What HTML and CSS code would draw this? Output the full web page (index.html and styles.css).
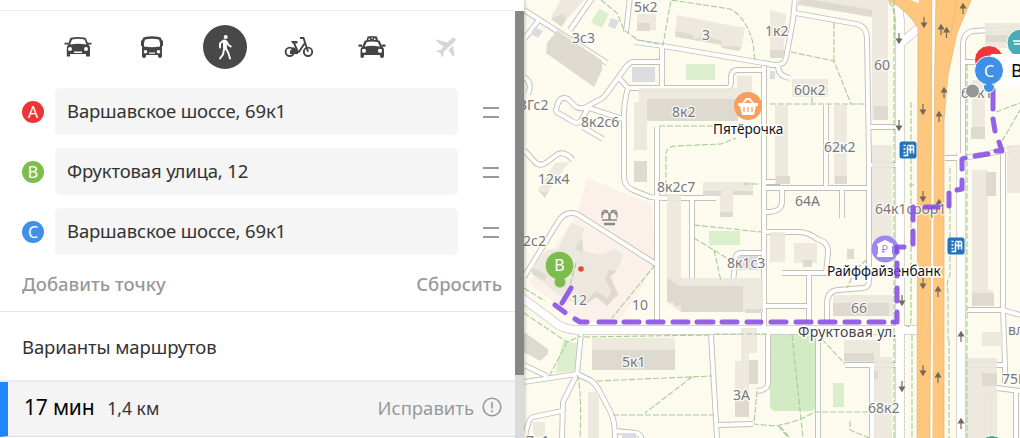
FILE: index.html
```html
<!DOCTYPE html>
<html lang="ru">
<head>
  <meta charset="UTF-8" />
  <meta name="viewport" content="width=device-width, initial-scale=1" />
  <title>Маршруты</title>
  <link rel="stylesheet" href="styles.css">
</head>
<body>

  <div class="app">
    <aside class="sidebar">
      <div class="panel">
        <div class="panel-top"></div>

        <nav class="modes">
          <button class="mode">
            <svg width="30" height="24" viewBox="0 0 30 24"><path fill-rule="evenodd" d="M7 3.5Q8 2 15 2T23 3.5L25.7 10Q27 11 27 13V21.5H23V19H7V21.5H3.800V13Q3.800 11 5 10ZM9 4.500 7 9.500Q15 8 23.500 9.500L21.500 4.500Q15 3 9 4.500ZM7 12A2 2 0 1 0 7 16 2 2 0 1 0 7 12M23 12A2 2 0 1 0 23 16 2 2 0 1 0 23 12M11 16.500V18H19V16.500Z"/><path d="M1.500 8.700H5.500M24.500 8.700H28.500" stroke="#444" stroke-width="1.800"/></svg>
          </button>
          <button class="mode">
            <svg width="30" height="24" viewBox="0 0 30 24"><path fill-rule="evenodd" d="M6 3Q8 1.200 15 1.200T24 3L25 5.500H26V11H25V21Q25 23 23 23T21 21V20H9V21Q9 23 7 23T5 21V11H4V5.500H5ZM8 4.500Q6.500 8 7 11.500Q15 13 23 11.500Q23.500 8 22 4.500Q15 3 8 4.500ZM8.500 15A1.800 1.800 0 1 0 8.500 18.600 1.800 1.800 0 1 0 8.500 15M21.500 15A1.800 1.800 0 1 0 21.500 18.600 1.800 1.800 0 1 0 21.500 15M12 17.500V18.800H18V17.500Z"/></svg>
          </button>
          <button class="mode active">
            <svg width="30" height="30" viewBox="0 0 30 30"><circle cx="15.700" cy="5" r="2"/><path d="M14.800 9.500 15 16" fill="none" stroke="#fff" stroke-width="3.800" stroke-linecap="round"/><path d="M13.500 8.500 10 11.500V15.500M16.500 9.500 18.500 13 20.800 14.500M16 16.500 18.500 21.500 20 26.500M14 17.500 13 22.500 10 26.500" fill="none" stroke="#fff" stroke-width="1.900" stroke-linecap="round" stroke-linejoin="round"/></svg>
          </button>
          <button class="mode">
            <svg width="30" height="24" viewBox="0 0 30 24"><g fill="none" stroke="#444" stroke-width="1.900"><circle cx="5.800" cy="16.800" r="4.200"/><circle cx="24" cy="16.800" r="4.200"/><path d="M16 3H19.500L24 16.800M6 16.800H15L20.500 8.500M10 8 13.500 16"/></g><path d="M7 6H13.500V8.500H8.500ZM9.500 12 14 15.500V19H6V16Z"/></svg>
          </button>
          <button class="mode">
            <svg width="30" height="24" viewBox="0 0 30 24"><path fill-rule="evenodd" d="M9.500 5.500 10.500 1.500Q15 .3 20 1.500L21 5.500H22.500L25.500 12Q27 13 27 15V21Q27 23 25 23T23 21V20H7V21Q7 23 5 23T3.500 21V15Q3.500 13 5 12L7.800 5.500ZM9.800 7 7.500 11.800Q15 9.800 23 11.800L20.700 7Q15 6 9.800 7ZM7 13.700A2.100 2.100 0 1 0 7 17.900 2.100 2.100 0 1 0 7 13.700M23 13.700A2.100 2.100 0 1 0 23 17.900 2.100 2.100 0 1 0 23 13.700M11.500 3.500V5H13V3.500ZM14.500 2.500V3.800H16V2.500ZM17 3.500V5H18.500V3.500Z"/><path d="M1.500 10.700H5M25 10.700H28.500" stroke="#444" stroke-width="2.200"/></svg>
          </button>
          <button class="mode disabled">
            <svg width="30" height="24" viewBox="0 0 30 24"><path d="M24.300 3.300Q25.500 5 23 7.500L12.500 17 12.300 21.500 11 22 9.300 18 5.500 16.500 6 15.300 10 15 12.300 11.500 5.500 6.500V4.500L16 7.500 20.500 3.500Q23 2 24.300 3.300ZM17.500 15 22 10.500 23.500 20.500 22 21.500Z"/></svg>
          </button>
        </nav>

        <ul class="points">
          <li class="point">
            <span class="letter letter-a">A</span>
            <div class="field">Варшавское шоссе, 69к1</div>
            <span class="handle"></span>
          </li>
          <li class="point">
            <span class="letter letter-b">B</span>
            <div class="field">Фруктовая улица, 12</div>
            <span class="handle"></span>
          </li>
          <li class="point">
            <span class="letter letter-c">C</span>
            <div class="field">Варшавское шоссе, 69к1</div>
            <span class="handle"></span>
          </li>
        </ul>

        <div class="actions">
          <span class="add">Добавить точку</span>
          <span class="reset">Сбросить</span>
        </div>

        <h2 class="variants">Варианты маршрутов</h2>

        <div class="route">
          <span class="time">17 мин</span>
          <span class="distance">1,4 км</span>
          <span class="fix">Исправить</span>
          <svg class="warn" width="20" height="20" viewBox="0 0 20 20"><circle cx="10" cy="10" r="8.800"/><path d="M10 5V11.500M10 13.300V15.300"/></svg>
        </div>
      </div>
      <div class="scrollbar"><div class="thumb"></div></div>
    </aside>

    <main class="map">
      <svg width="496" height="438" viewBox="524 0 496 438">
        <defs>
          <g id="lanes">
            <path d="M524 10 607 63M593-3 570 30M538 21 525 38M630-3 626 32M635 42 663 46 775 65M662 46V88M662 62H633Q630 62 626 67L607 93Q603 99 597 101L588 106Q583 110 576 107L568 99Q561 96 558 103L556 110Q556 113 560 114L572 121Q579 126 583 117L588 108M618 77 628 88H728Q732 87 731 76 732 70 738 70H764M628 88Q623 104 624 125V178Q625 187 633 190L650 197Q657 198 665 198H716M589 108 623 119M583 127 603 139M524 77Q533 83 528 94"/>
            <path d="M657 127V322M692 199V281Q692 287 698 287H729Q733 287 733 282L736 256Q737 253 742 253H764M764 66V330M764 182H780M764 212H770M524 150 534 161Q540 168 547 162L558 154Q565 151 573 160M524 277 558 222Q565 210 577 214L656 264"/>
            <path d="M524 365 547 376M581 333 577 374 524 382M577 374 563 402 562 438M562 411 533 417Q528 418 525 438M577 374 590 380Q596 384 600 392L611 413Q615 421 615 438M615 431 636 433Q641 434 642 440M711 335 717 438M717 425 753 424M768 334V383Q768 390 757 391"/>
            <path d="M795-2 793 20 786 58Q784 65 776 65H770M778 66Q778 76 790 78M795 13 856 24Q867 26 867 39L869 160V281Q869 287 863 288L838 290Q827 291 827 304V322M868 127H897M869 165H897M826 105V188M765 188H869M782 188V203Q781 211 770 212M842 188V218M765 232H800Q810 233 817 239 829 242 828 253L826 273H782M809 273V322M765 306H809M818 338V438M845 365H898M872 365V438"/>
            <path d="M963 155V45Q963 33 973 31L1013 29M964 62H975M945 158H963L1003 151 1020 148M1003 151V310L1005 365V383M967 310H1003L1020 315M967 365H1005M988 440V396Q989 388 997 388L1020 391M1016 390V440"/>
          </g>
          <g id="streets">
            <path d="M522 298 552 320Q562 330 578 330H918M897-3 900 20V440M900 44 919 28M961 153V440"/>
          </g>
          <path id="up" d="M0 5V-4M-2.500-1 0-5 2.500-1Z"/>
          <g id="stop">
            <rect width="17" height="17" rx="2.500"/>
            <path d="M4 4H6M4 7.500H6M4 11H6M4 14H8V5M8 8H14M11 4V12M8 4H14M14 4V12"/>
          </g>
        </defs>

        <rect x="524" width="496" height="438" fill="#fdfbee"/>

        <!-- lawns and the hospital ground -->
        <path d="M587 178 652 204 655 262 577 215ZM575 218 654 266 632 303 618 322H580L529 283Z" fill="#fcf0ea"/>
        <g fill="#dcefcc">
          <path d="M599 9 609 14 602 28 591 22ZM686 64H715V80H686ZM709 231H740V245H709ZM563 341 577 343 575 371 555 373ZM833 383H844V407H833Z"/>
          <rect x="770" y="334" width="46" height="77" rx="5" fill="#d3ebc5"/>
        </g>

        <!-- roads -->
        <g fill="none" stroke-linejoin="round">
          <use href="#lanes" stroke="#c2bfb6" stroke-width="5.800"/>
          <use href="#streets" stroke="#cbc8be" stroke-width="9.400"/>
          <use href="#lanes" stroke="#fff" stroke-width="4"/>
          <use href="#streets" stroke="#fff" stroke-width="7.800"/>
        </g>
        <path d="M884-2H932L930 440H917L918 28Q907 9 884-2ZM936-2H972L957 33 948 75 944 120V440H932L934 110Z" fill="#fec77d" stroke="#e3b574" stroke-width=".7"/>
        <path d="M902-2 919 4V15Q912 5 893-2Z" fill="#fec77d"/>
        <path d="M904-2H919V3Z" fill="#fdfbee"/>
        <path d="M933.500 0 931.500 438" stroke="#fff" stroke-width="1.800"/>
        <path d="M957 0 951 35" stroke="#e9b674" stroke-width=".7"/>

        <!-- buildings -->
        <g fill="#ebe7dc" fill-opacity=".9">
          <path d="M562-2H586L562 25 551 17ZM557 29 602 60 594 85 546 53ZM677 15 745 28 741 50 675 36ZM639 88H738V120H647V150H634V102H639ZM637 14H656V30H637ZM737 76H752V96H737Z"/>
          <path d="M667 194H681V283H667ZM703 182H753V194H733V216H720V194H703ZM569 162 545 196 538 190 555 163Z"/>
          <path d="M571 223 584 228 580 244 586 252 604 255 613 249 623 254 620 265 610 275 618 295 607 303 596 296 587 304 566 301 535 276 532 267 547 250 558 249Z"/>
          <path d="M775 105H788V184H775ZM834 105H847V184H834ZM797-2H872V17L797 5ZM872-2H888V120H872ZM872 145H892V240H872ZM972 80H985V138H972ZM972 170H988V294H972ZM833 295H893V316H833ZM794 243H817V263H794ZM592 338H675V352H592ZM741 328H757V353H749V405H735V361H741ZM588 392H599V438H588ZM770 232H785V262H770Z"/>
          <path d="M844 340H880V362H844ZM874 357H892V438H874ZM966 358H997V438H966ZM972 290H993V303H972ZM533 422H545V438H533ZM985 23H1020V48H985ZM1007 145H1020V193H1007ZM982 332H1003V346H982ZM667 278H763V312H681L667 302ZM792 79H828V97H792ZM770 10 786 14 783 58H770Z"/>
        </g>
        <g fill="#dedacf">
          <path d="M557 31 602 61 602 70 594 87 546 53 547 43ZM647 99H738V121H647ZM676 31 693 35 694 39 705 36 722 41 722 46 740 47 739 51 722 48 721 44 694 40 675 37ZM637 23H650V31H637ZM562 14 566 18 562 27 551 19Z"/>
          <path d="M634 161H647V182H634ZM703 191H721V196H703ZM733 191H753V195H733ZM720 212H733V217H720ZM667 278 680 286H743V312H681V306H674V302H667ZM745 309H763V313H745ZM592 350H675V370H592Z"/>
          <path d="M524 332 548 349V354L540 361 524 352ZM776 176H790V184H776ZM835 176H847V184H835ZM874 106H888V120H874ZM804-2 872 10V17L797 4ZM770 50H784V58H770ZM833 303H889V316H833ZM844 353H874V361H844ZM874 371H878V379H874ZM749 360H758V384H749ZM735 400H749V417H735ZM971 127H985V139H971ZM986 172H996V196H986ZM972 293H994V306H972ZM982 373H997V386H982ZM803 260H812V267H803ZM847 249H854V259H847ZM986 35H1011V42H986ZM538 190 545 193 549 190 545 198Z"/>
          <path d="M617 271 610 277 618 294 607 306 596 297 586 304 587 300 596 291 607 298 611 292 605 278 609 270ZM583 246 582 253 575 248 582 238ZM532 268 547 275 545 281 532 274Z"/>
        </g>
        <path d="M632 67H655V82H632ZM534 27 543 31 538 38 531 34ZM611 18 619 21 615 29 608 26ZM737 256H758V270H737ZM622 433H636V438H622ZM770 71H775V79H770Z" fill="#dcdce0"/>

        <!-- footpaths -->
        <g class="paths">
          <path d="M601 0 617 13 624 30 638 40 663 45 671 0 730 9Q746 17 753 43L755 60M659 126H730M666 194V153Q667 147 675 146L721 144 736 138M694 225 761 232M694 238 730 260M714 250 721 281M744 184H760M576 263 570 285M524 288 545 301M655 265 612 318M584 337 711 335M714 334H767M524 313 567 342 581 336M567 342 550 375M577 375Q582 387 580 438M597 381 712 376M692 377 645 413M613 415H714M757 391 754 424 775 426Q795 423 815 412H868M822 339 845 364M792 335 803 438M778 426 795 445M780 426 790 438M850 421V430L872 439"/>
          <path d="M791 52 834 61 851 104H866M834 61V22M770 104H865M812 97V104M894 0V438M889 2Q897 10 894 40M911 102V320Q910 330 906 325M909 185H914M912 335V438M967 65V438M949 340V438M950 168V275Q946 282 948 290V340M996 112 1020 103M998 148 1020 110M867 260Q857 265 847 288"/>
        </g>

        <!-- traffic direction -->
        <g class="arrows">
          <use href="#up" x="963" y="9"/><use href="#up" x="941" y="30"/><use href="#up" x="946.500" y="33"/><use href="#up" x="944" y="93"/><use href="#up" x="939" y="117"/><use href="#up" x="938" y="292"/><use href="#up" x="938" y="378"/><use href="#up" x="961" y="337"/><use href="#up" x="961" y="424"/><use href="#up" x="939" y="205"/>
          <g transform="rotate(180)"><use href="#up" x="-924" y="-22"/><use href="#up" x="-923" y="-109"/><use href="#up" x="-923" y="-196"/><use href="#up" x="-923" y="-283"/><use href="#up" x="-923" y="-370"/><use href="#up" x="-899" y="-38"/><use href="#up" x="-899" y="-125"/><use href="#up" x="-902" y="-300"/><use href="#up" x="-902" y="-386"/></g>
        </g>

        <!-- fountain -->
        <g fill="none" stroke="#898989" stroke-width="1.300"><path d="M609 220V216Q609 212 606 212T603 215M610 220V216Q610 212 613 212T616 215M608 211Q602 209 602 214V218M611 211Q617 209 617 214V218M602 220H617"/><path d="M604 224H615" stroke-width="2.500"/></g>

        <g class="houses">
          <text x="634" y="12">5к2</text><text x="572" y="43">3с3</text><text x="702" y="40">3</text><text x="765" y="36">1к2</text>
          <text x="519" y="110">3Гс2</text><text x="581" y="127">8к2с6</text><text x="672" y="117">8к2</text><text x="794" y="95">60к2</text>
          <text x="874" y="70">60</text><text x="824" y="152">62к2</text><text x="538" y="184">12к4</text><text x="657" y="192">8к2с7</text>
          <text x="795" y="206">64А</text><text x="875" y="214">64к1соор1</text><text x="523" y="246">2с2</text><text x="727" y="268">8к1с3</text>
          <text x="571" y="305">12</text><text x="632" y="310">10</text><text x="851" y="313">66</text><text x="622" y="367">5к1</text>
          <text x="733" y="400">3А</text><text x="868" y="413">68к2</text><text x="1008" y="335">вл</text><text x="1002" y="384">75Б</text>
          <text x="526" y="446">7к1</text><text x="961" y="98">69к1</text>
        </g>

        <!-- places -->
        <circle cx="748" cy="106" r="14" fill="#fa9e5d"/>
        <path d="M738 103H758V106H756L754 115H742L740 106H738ZM742 103 746 98 750 98 754 103 752 103 749 100H747L744 103Z" fill="#fff"/>
        <path d="M744 107V112M748 107V112M752 107V112" stroke="#fa9e5d" stroke-width="1.300"/>
        <circle cx="885" cy="249" r="13.500" fill="#9a8bed"/>
        <path d="M877 244 885 240 893 244V246H892V254H893V257H877V254H878V246H877Z" fill="#fff"/>
        <text class="ruble" x="881.500" y="253">₽</text>
        <g class="stops">
          <use href="#stop" x="899.500" y="141.500"/>
          <use href="#stop" x="947.500" y="237.500"/>
        </g>

        <g class="places">
          <text x="713" y="134">Пятёрочка</text>
          <text x="827" y="276">Райффайзенбанк</text>
          <text class="street" x="798" y="337">Фруктовая ул.</text>
        </g>

        <path class="way" d="M571 288 562 303M555 305 565 312.500M575 319 580 322H587M599 322H615M624 322H639M648 322H663M673 322H688M697 322H713M722 322H737M747 322H761M771 322H786M796 322H811M820 322H835M845 322H859M869 322H884M893 322H897V312M897 301V288M897 276V263M897 252V247H904M913 244V231M913 220V207M925 207H938M949 206V193M957 190 962 189V180M962 169V159L965 158M975 156 988 154M996 151 1002 151 999 142M995 131 993 119M993 109V89"/>

        <!-- route points -->
        <circle cx="581" cy="269" r="2.800" fill="#e8453c"/>
        <circle cx="560" cy="282" r="5.500" fill="#7dbd50"/><circle cx="559.500" cy="265.500" r="13.800" fill="#7dbd50"/>
        <path d="M557 276H562L563 280H557Z" fill="#7dbd50"/>
        <circle cx="1021" cy="43" r="14" fill="#4aacb3" stroke="#fff"/>
        <path d="M1013 41H1020M1014 44H1020" stroke="#fff" stroke-width="1.500"/>
        <circle cx="989" cy="60" r="14.500" fill="#f13538" stroke="#fff"/>
        <rect x="990" y="54" width="34" height="33" rx="3" fill="#fff"/>
        <circle cx="972.500" cy="91" r="7" fill="#969696" stroke="#fff"/>
        <circle cx="989" cy="87" r="5.500" fill="#4090e7" stroke="#fff"/>
        <circle cx="989" cy="70.500" r="14.500" fill="#4090e7" stroke="#fff"/>
        <path d="M986 84H992L991 88H987Z" fill="#4090e7"/>
        <circle cx="992" cy="449" r="13.500" fill="#47a790" stroke="#fff"/>
        <g class="pins"><text x="559.500" y="271">B</text><text x="989" y="76.500">C</text></g>
        <text class="address" x="1011" y="77">Ва</text>
      </svg>
    </main>
  </div>

</body>
</html>
```

FILE: styles.css
```css
* {
  box-sizing: border-box;
}
body {
  margin: 0;
  font-family: "Noto Sans", "Open Sans", sans-serif;
  background: #fff;
  color: #333;
}

.app {
  display: flex;
  height: 438px;
  overflow: hidden;
}
.sidebar {
  display: flex;
  width: 524px;
  flex: none;
  background: #fff;
  box-shadow: 0 0 4px rgb(0 0 0 / 0.35);
  z-index: 1;
}
.panel {
  width: 515px;
}
.panel-top {
  height: 11px;
  border-bottom: 1px solid #ebebeb;
}
.scrollbar {
  width: 9px;
  padding-top: 11px;
  background: linear-gradient(#fff 11px, #dbdbdb 11px);
}
.thumb {
  height: 364px;
  background: #878787;
}

/* transport modes */
.modes {
  display: flex;
  gap: 29.6px;
  padding: 14px 0 0 56px;
  height: 77px;
}
.mode {
  display: flex;
  align-items: center;
  justify-content: center;
  width: 44px;
  height: 44px;
  padding: 0;
  border: none;
  border-radius: 50%;
  background: none;
}
.mode svg {
  fill: #444;
}
.mode.active {
  background: #484848;
}
.mode.active svg {
  fill: #fff;
}
.mode.disabled svg {
  fill: #d6d6d6;
}

/* route points */
.points {
  display: flex;
  flex-direction: column;
  gap: 13px;
  margin: 0;
  padding: 0 16px 0 22px;
  list-style: none;
}
.point {
  display: flex;
  align-items: center;
  height: 47px;
}
.letter {
  width: 22px;
  height: 22px;
  margin-right: 11px;
  border-radius: 50%;
  color: #fff;
  font-size: 16px;
  line-height: 22px;
  text-align: center;
}
.letter-a {
  background: #ed3437;
}
.letter-b {
  background: #7dbd50;
}
.letter-c {
  background: #4090e7;
}
.field {
  width: 403px;
  height: 47px;
  padding-left: 12px;
  border-radius: 5px;
  background: #f5f5f5;
  font-size: 18.5px;
  letter-spacing: -0.15px;
  line-height: 46px;
}
.handle {
  width: 16px;
  height: 11px;
  margin: 2px 0 0 25px;
  border-top: 2px solid #999;
  border-bottom: 2px solid #999;
}

.actions {
  display: flex;
  justify-content: space-between;
  height: 57px;
  padding: 0 13px 0 22px;
  border-bottom: 1px solid #e6e6e6;
  color: #999;
  font-size: 18.5px;
  font-weight: 500;
  line-height: 58px;
}

.variants {
  height: 70px;
  margin: 0;
  padding-left: 22px;
  border-bottom: 2px solid #ebebeb;
  font-size: 18.5px;
  font-weight: 400;
  letter-spacing: -0.1px;
  line-height: 69px;
}
.route {
  display: flex;
  align-items: center;
  height: 55px;
  padding: 0 13px 4px 16px;
  border-left: 8px solid #1e88fb;
  border-bottom: 1px solid #ddd;
  background: #f4f4f4;
}
.time {
  color: #000;
  font-size: 21px;
  letter-spacing: -0.2px;
}
.distance {
  margin-left: 13px;
  padding-top: 1px;
  font-size: 17.5px;
}
.fix {
  margin-left: auto;
  color: #999;
  font-size: 18.5px;
}
.warn {
  margin-left: 8px;
  fill: none;
  stroke: #999;
  stroke-width: 1.6;
}

/* map */
.map svg {
  display: block;
}
.paths {
  fill: none;
  stroke: #a5ce96;
  stroke-width: 1.1;
  stroke-dasharray: 6 2;
}
.arrows {
  fill: #756957;
  stroke: #756957;
  stroke-width: 1.2;
}
.houses text {
  fill: #777;
  stroke: #fff;
  stroke-width: 2.5px;
  stroke-opacity: 0.8;
  paint-order: stroke;
  font-size: 14px;
}
.places text {
  fill: #111;
  stroke: #fff;
  stroke-width: 3px;
  paint-order: stroke;
  font-size: 13.6px;
}
.places .street {
  fill: #444;
  font-size: 14px;
  letter-spacing: 0.3px;
}
.ruble {
  fill: #9a8bed;
  font-size: 11px;
}
.stops {
  fill: #2473bf;
}
.stops path,
#stop path {
  fill: none;
  stroke: #fff;
  stroke-width: 1.5;
}
.way {
  fill: none;
  stroke: #8145e5;
  stroke-opacity: 0.85;
  stroke-width: 5;
  stroke-linecap: round;
  stroke-linejoin: round;
}
.pins text {
  fill: #fff;
  font-size: 16px;
  text-anchor: middle;
}
.address {
  fill: #000;
  font-size: 18px;
}
```
